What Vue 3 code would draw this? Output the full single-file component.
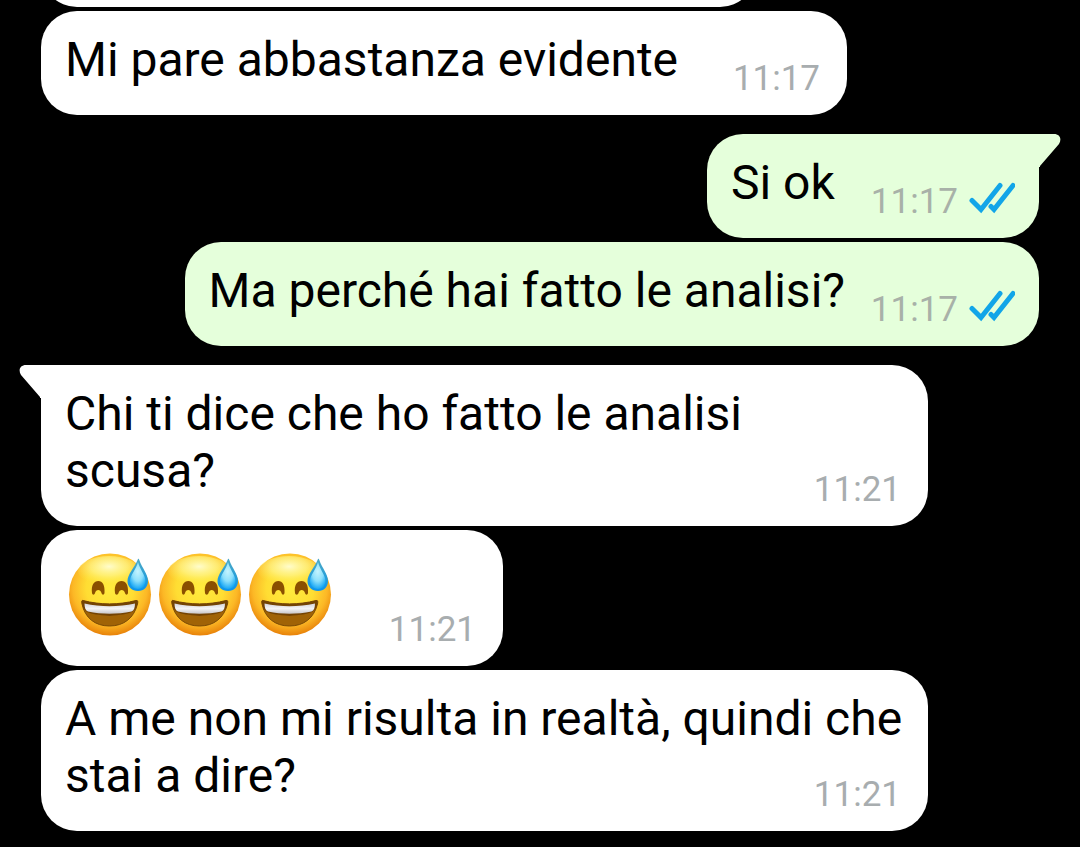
<script setup>
const messages = [
  { id: 1, side: 'in', lead: 'Mi pare abbastanza', last: 'evidente', time: '11:17' },
  { id: 2, side: 'out', lead: 'Si', last: 'ok', time: '11:17', first: true },
  { id: 3, side: 'out', lead: 'Ma perché hai fatto le', last: 'analisi?', time: '11:17' },
  { id: 4, side: 'in', lead: 'Chi ti dice che ho fatto le analisi', last: 'scusa?', time: '11:21', first: true },
  { id: 5, side: 'in', emoji: 3, time: '11:21' },
  { id: 6, side: 'in', lead: 'A me non mi risulta in realtà, quindi che stai a', last: 'dire?', time: '11:21' },
]
</script>

<template>
  <main class="chat">
    <svg class="defs" aria-hidden="true">
      <defs>
        <radialGradient id="face" cx="0.5" cy="0.42" r="0.58">
          <stop offset="0" stop-color="#ffec3e" />
          <stop offset="0.5" stop-color="#ffdd33" />
          <stop offset="0.78" stop-color="#fcb826" />
          <stop offset="1" stop-color="#e88209" />
        </radialGradient>
        <radialGradient id="shine" cx="0.5" cy="0.35" r="0.6">
          <stop offset="0" stop-color="#fffccc" stop-opacity="1" />
          <stop offset="0.5" stop-color="#fff58c" stop-opacity="0.7" />
          <stop offset="1" stop-color="#ffec50" stop-opacity="0" />
        </radialGradient>
        <linearGradient id="drop" x1="0" y1="0" x2="0" y2="1">
          <stop offset="0" stop-color="#4fa9c4" />
          <stop offset="0.5" stop-color="#2ba0d6" />
          <stop offset="1" stop-color="#0b94ee" />
        </linearGradient>
        <radialGradient id="gleam" cx="0.5" cy="0.35" r="0.65">
          <stop offset="0" stop-color="#c4f4ff" />
          <stop offset="0.55" stop-color="#8de0fb" />
          <stop offset="1" stop-color="#1aa8f5" />
        </radialGradient>
        <linearGradient id="teeth" x1="0" y1="0" x2="0" y2="1">
          <stop offset="0" stop-color="#d6d6dc" />
          <stop offset="0.5" stop-color="#f4f4f6" />
          <stop offset="1" stop-color="#c8c6c8" />
        </linearGradient>
      </defs>
    </svg>

    <div class="bubble in earlier"></div>

    <article
      v-for="m in messages"
      :key="m.id"
      class="bubble"
      :class="[m.side, { first: m.first }]"
    >
      <svg v-if="m.first" class="tail" viewBox="0 0 22 33" aria-hidden="true">
        <path d="M0 0H15C21 0 23 5 20 10L1 32V33H0Z" />
      </svg>

      <p v-if="m.emoji" class="text faces">
        <svg
          v-for="n in m.emoji"
          :key="n"
          class="emoji"
          viewBox="0 0 90 89"
          role="img"
          aria-label="grinning face with sweat"
        >
          <circle cx="45" cy="44.5" r="41" fill="url(#face)" />
          <ellipse cx="44" cy="21" rx="31" ry="15" fill="url(#shine)" />
          <path
            d="M27 43C26 35 29 31 33.300 31S40 35 39.500 43C39 45.500 37 45 36.500 43C35.500 39 31 39 30 43C29.500 45 27.500 45.500 27 43Z"
            fill="#8a5000"
          />
          <path
            d="M50 43C49 35 52 31 56.500 31S63.500 35 63 43C62.500 45.500 60.500 45 60 43C59 39 54.500 39 53.500 43C53 45 50.500 45.500 50 43Z"
            fill="#8a5000"
          />
          <path
            d="M18 50.500C35 55 54 55 71 50.500C73 50 73 52 72.500 54C69 68 59 76 44.500 76S20 68 17 54C16.500 52 16.500 50 18 50.500Z"
            fill="#a06306"
            stroke="#7a4a05"
            stroke-width="1"
          />
          <path
            d="M18 50.500C35 55 54 55 71 50.500C72.500 50 73 51 72.500 53C71 62 67 64 44.500 66C22 64 18 62 17 53C16.500 51 17 50 18 50.500Z"
            fill="#744404"
          />
          <path
            d="M19.500 53.500C36 57 53 57 70 53.500C70 57.500 69 60.500 66.500 61.500C52 64.500 37 64.500 23 61.500C20.500 60.500 19.500 57.500 19.500 53.500Z"
            fill="url(#teeth)"
          />
          <path
            d="M73 9C73.500 8.500 74 9 74.300 10C77 18 83 24 83 31C83 37 79 41 73 41S62.500 37 62.500 31C62.500 24 69.500 18 73 9Z"
            fill="url(#drop)"
          />
          <path
            d="M73 12C74.500 19 80.500 25 80.500 31C80.500 36 77 39 73 39S65 36 65 31C65 25 71.500 19 73 12Z"
            fill="url(#gleam)"
          />
        </svg>
      </p>
      <p v-else class="text">{{ m.lead }} <span class="last">{{ m.last }}</span></p>

      <footer class="meta">
        <time>{{ m.time }}</time>
        <svg v-if="m.side === 'out'" class="ticks" viewBox="0 0 46 32" role="img" aria-label="read">
          <path d="M3 18.500L12 27.500L31 3.500" />
          <path d="M22 24.500L25 27.500L44 3.500" />
        </svg>
      </footer>
    </article>
  </main>
</template>

<style>
html,
body {
  background: #000;
}
</style>

<style scoped>
.chat {
  box-sizing: border-box;
  display: flex;
  flex-direction: column;
  justify-content: flex-end;
  gap: 4px;
  height: 100vh;
  padding: 0 41px 16px;
  overflow: hidden;
  background: #000;
  font-family: Roboto, "Noto Sans", sans-serif;
}

.defs {
  position: absolute;
  width: 0;
  height: 0;
}

.bubble {
  position: relative;
  box-sizing: border-box;
  display: grid;
  flex: none;
  min-width: 332px;
  max-width: 887px;
  padding: 20px 24px 16px;
  border-radius: 36px;
  color: #000;
}

.in {
  align-self: flex-start;
  background: #fff;
  fill: #fff;
}

.out {
  align-self: flex-end;
  background: #e5ffdb;
  fill: #e5ffdb;
}

.first {
  margin-top: 15px;
}

.in.first {
  border-top-left-radius: 0;
}

.out.first {
  border-top-right-radius: 0;
}

.earlier {
  width: 100%;
  max-width: 715px;
  height: 104px;
}

.tail {
  position: absolute;
  top: 0;
  left: 100%;
  width: 22px;
  height: 33px;
}

.in .tail {
  right: 100%;
  left: auto;
  transform: scaleX(-1);
}

.text {
  grid-area: 1 / 1;
  margin: 0 0 11px;
  font-size: 48px;
  line-height: 57px;
}

.last {
  padding-right: 145px;
  white-space: nowrap;
}

.out .last {
  padding-right: 170px;
}

.faces {
  display: flex;
  padding-right: 144px;
}

.emoji {
  width: 90px;
  height: 89px;
}

.meta {
  grid-area: 1 / 1;
  display: flex;
  align-items: flex-end;
  align-self: end;
  justify-self: end;
  gap: 11px;
  padding-right: 3px;
  color: #a8adaf;
  font-size: 35px;
  line-height: 41px;
}

.out .meta {
  padding-right: 0;
  color: #a8b1a8;
}

.ticks {
  width: 46px;
  height: 32px;
  margin-bottom: 8px;
  fill: none;
  stroke: #12a5e8;
  stroke-width: 5;
  stroke-linecap: round;
}
</style>
